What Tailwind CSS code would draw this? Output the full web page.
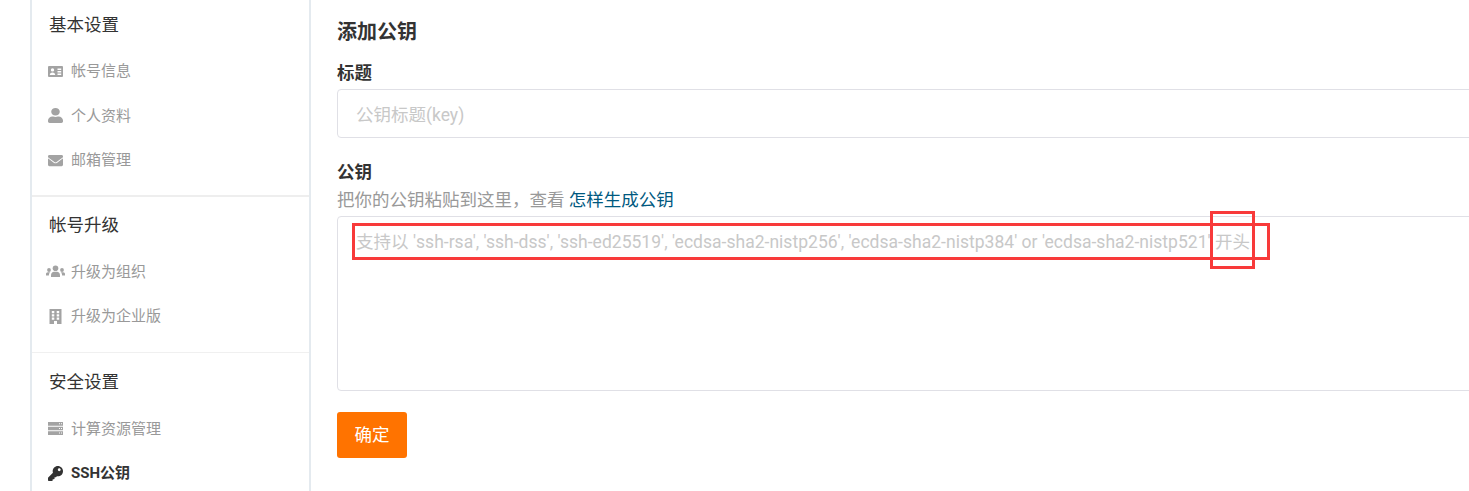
<!DOCTYPE html>
<html lang="zh-CN">
<head>
    <meta charset="utf-8">
    <title>SSH公钥</title>
    <script src="https://cdn.jsdelivr.net/npm/@tailwindcss/browser@4"></script>
</head>
<body class="bg-white h-[491px] overflow-hidden font-['Roboto','Noto_Sans_CJK_SC',sans-serif] text-[#333]">
<div class="flex pl-[30px] w-[1469px] overflow-hidden">

    <!-- sidebar -->
    <aside class="w-[281px] shrink-0 h-[491px] border-x-2 border-[#e4eaef] overflow-hidden">
        <div class="pb-[12px] border-b-2 border-[#eeeeee]">
            <h3 class="h-[49px] pt-[2px] pl-[17px] flex items-center text-[17.5px]">基本设置</h3>
            <a class="h-[44.5px] pl-[16px] flex items-center gap-[8px] text-[15px] text-[#999]">
                <svg class="w-[15px] h-[15px] fill-[#a3a3a3]" viewBox="0 0 15 15"><path fill-rule="evenodd" d="M1 2h13a1 1 0 0 1 1 1v9a1 1 0 0 1-1 1H1a1 1 0 0 1-1-1V3a1 1 0 0 1 1-1zm3.500 2.200a1.700 1.700 0 1 0 0 3.400 1.700 1.700 0 0 0 0-3.400zM1.800 11h5.400c0-1.600-1-2.600-2.700-2.600S1.800 9.400 1.800 11zM9.500 4.500v1.500h3.700V4.500zm0 2.500v1.500h3.700V7zm0 2.500V11h3.700V9.500z"/></svg>
                帐号信息
            </a>
            <a class="h-[44.5px] pl-[16px] flex items-center gap-[8px] text-[15px] text-[#999]">
                <svg class="w-[15px] h-[15px] fill-[#a3a3a3]" viewBox="0 0 448 512" preserveAspectRatio="none"><path d="M224 256c70.700 0 128-57.300 128-128S294.700 0 224 0 96 57.300 96 128s57.300 128 128 128zm89.600 32h-16.700c-22.200 10.200-46.900 16-72.900 16s-50.600-5.800-72.900-16h-16.700C60.200 288 0 348.200 0 422.400V464c0 26.500 21.500 48 48 48h352c26.500 0 48-21.500 48-48v-41.600c0-74.200-60.200-134.400-134.400-134.400z"/></svg>
                个人资料
            </a>
            <a class="h-[44.5px] pl-[16px] flex items-center gap-[8px] text-[15px] text-[#999]">
                <svg class="w-[15px] h-[15px] fill-[#a3a3a3]" viewBox="0 0 512 512"><path d="M502.300 190.800c3.900-3.100 9.700-.2 9.700 4.700V400c0 26.500-21.500 48-48 48H48c-26.500 0-48-21.500-48-48V195.600c0-5 5.700-7.800 9.700-4.700 22.400 17.400 52.100 39.500 154.100 113.600 21.100 15.400 56.700 47.800 92.200 47.600 35.700.3 72-32.800 92.300-47.600 102-74.100 131.600-96.300 154-113.700zM256 320c23.200.4 56.600-29.200 73.400-41.400 132.700-96.300 142.800-104.700 173.400-128.700 5.800-4.500 9.200-11.500 9.200-18.900v-19c0-26.500-21.500-48-48-48H48C21.500 64 0 85.500 0 112v19c0 7.400 3.400 14.300 9.200 18.900 30.600 23.900 40.700 32.400 173.400 128.700 16.800 12.200 50.200 41.800 73.400 41.400z"/></svg>
                邮箱管理
            </a>
        </div>
        <div class="pb-[13px] border-b border-[#f0f0f0]">
            <h3 class="h-[53px] pt-[4px] pl-[17px] flex items-center text-[17.5px]">帐号升级</h3>
            <a class="h-[44.5px] pl-[14px] flex items-center gap-[6px] text-[15px] text-[#999]">
                <svg class="w-[19px] h-[15px] fill-[#a3a3a3]" viewBox="0 0 19 15"><circle cx="9.500" cy="4.200" r="2.800"/><path d="M5 13v-1.800C5 9 6.500 7.800 8 7.800h3c1.500 0 3 1.200 3 3.400V13z"/><circle cx="3" cy="6" r="1.900"/><circle cx="16" cy="6" r="1.900"/><path d="M0 11.500V10c0-1 .8-1.800 1.800-1.800h2.400c-.8.700-1.300 1.800-1.300 3.300zM19 11.500V10c0-1-.8-1.800-1.800-1.800h-2.400c.8.700 1.300 1.800 1.300 3.300z"/></svg>
                升级为组织
            </a>
            <a class="h-[44.5px] pl-[16px] flex items-center gap-[8px] text-[15px] text-[#999]">
                <svg class="w-[15px] h-[15px] fill-[#a3a3a3]" viewBox="0 0 15 15"><path fill-rule="evenodd" d="M1.500 0h12v15H9v-3H6v3H1.500zm2.300 2v2.200h2.500V2zm0 3.300v2.200h2.500V5.300zm0 3.300v2.200h2.500V8.600zm4.900-6.600v2.200h2.500V2zm0 3.300v2.200h2.500V5.300zm0 3.300v2.200h2.500V8.600z"/></svg>
                升级为企业版
            </a>
        </div>
        <div>
            <h3 class="h-[54px] pt-[5px] pl-[17px] flex items-center text-[17.5px]">安全设置</h3>
            <a class="h-[44.5px] pl-[16px] flex items-center gap-[8px] text-[15px] text-[#999]">
                <svg class="w-[15px] h-[15px] fill-[#a3a3a3]" viewBox="0 0 15 15"><path fill-rule="evenodd" d="M0 1h15v3.700H0zm0 4.700h15v3.600H0zm0 4.600h15V14H0zM11 2.300v1h1v-1zm2 0v1h1v-1zM11 7v1h1V7zm2 0v1h1V7zm-2 4.600v1h1v-1zm2 0v1h1v-1z"/></svg>
                计算资源管理
            </a>
            <a class="h-[44.5px] pl-[16px] flex items-center gap-[8px] text-[15px] font-bold text-[#333]">
                <svg class="w-[15px] h-[15px] fill-[#333]" viewBox="0 0 512 512"><path fill-rule="evenodd" d="M512 176C512 273.200 433.200 352 336 352c-11.200 0-22.200-1-32.800-3l-24 27a24 24 0 0 1-18 8H224v40c0 13.300-10.700 24-24 24h-40v40c0 13.300-10.700 24-24 24H24c-13.300 0-24-10.700-24-24v-78c0-6.400 2.500-12.500 7-17l161.800-161.800C163.100 213.800 160 195.300 160 176 160 78.800 238.800 0 336 0c97.500 0 176 78.500 176 176zM336 128c0 26.500 21.500 48 48 48s48-21.500 48-48-21.500-48-48-48-48 21.500-48 48z"/></svg>
                SSH公钥
            </a>
        </div>
    </aside>

    <!-- form -->
    <main class="relative flex-1 pl-[26px] pt-[19px]">
        <h2 class="text-[20px] leading-[26px] font-bold">添加公钥</h2>
        <label class="block mt-[16px] text-[17.5px] leading-[24px] font-bold">标题</label>
        <input class="block mt-[4px] w-[1200px] h-[49px] pl-[18px] pr-[18px] pt-[2px] border border-[#e0e0e6] rounded-[4px] text-[17.5px] placeholder:text-[#c8c8c8]" placeholder="公钥标题(key)">
        <label class="block mt-[22px] text-[17.5px] leading-[24px] font-bold">公钥</label>
        <p class="mt-[3px] text-[17.5px] leading-[26px] text-[#999]">把你的公钥粘贴到这里，查看 <a class="text-[#005980]">怎样生成公钥</a></p>
        <textarea class="block mt-[3px] w-[1200px] h-[175px] px-[18px] py-[12px] border border-[#e0e0e6] rounded-[4px] resize-none text-[17.5px] leading-[26px] placeholder:text-[#c8c8c8] placeholder:tracking-[0.025px]" placeholder="支持以 'ssh-rsa', 'ssh-dss', 'ssh-ed25519', 'ecdsa-sha2-nistp256', 'ecdsa-sha2-nistp384' or 'ecdsa-sha2-nistp521' 开头"></textarea>
        <button class="block mt-[21px] w-[70px] h-[46px] bg-[#ff7300] rounded-[3px] text-white text-[17.5px]">确定</button>

        <!-- red annotation boxes drawn on the screenshot -->
        <div class="absolute left-[41px] top-[223px] w-[918px] h-[37px] border-[3px] border-[#f83a3a]"></div>
        <div class="absolute left-[899px] top-[211px] w-[45px] h-[58px] border-[3px] border-[#f83a3a]"></div>
    </main>
</div>
</body>
</html>
